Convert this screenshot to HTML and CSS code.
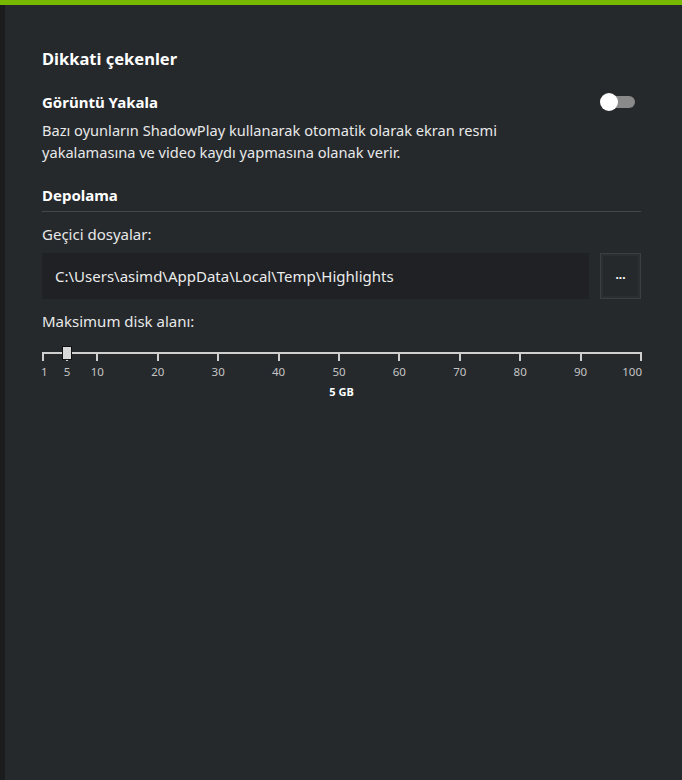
FILE: index.html
```html
<!DOCTYPE html>
<html>
<head>
	<title>Dikkati çekenler</title>
	<link rel="stylesheet" href="styles.css">
</head>
<body>
<div id="topbar"></div>
<div id="frame">
	<div id="edge"></div>
	<div id="panel">
		<h1>Dikkati çekenler</h1>

		<div class="row">
			<h2>Görüntü Yakala</h2>
			<div class="toggle"><span class="knob"></span></div>
		</div>
		<p class="desc">Bazı oyunların ShadowPlay kullanarak otomatik olarak ekran resmi<br>yakalamasına ve video kaydı yapmasına olanak verir.</p>

		<h2 class="section">Depolama</h2>

		<div class="label first">Geçici dosyalar:</div>
		<div class="pathrow">
			<div class="path">C:\Users\asimd\AppData\Local\Temp\Highlights</div>
			<button class="browse">...</button>
		</div>

		<div class="label">Maksimum disk alanı:</div>
		<div id="slider">
			<div class="track"></div>
			<div id="ticks"></div>
			<div class="thumb" id="thumb"></div>
		</div>
		<div class="value">5 GB</div>
	</div>
</div>

<script type="text/javascript">
	var marks=[1,5,10,20,30,40,50,60,70,80,90,100]
	var ticks=document.getElementById("ticks")
	function pos(v){
		return ((v-1)/99*100)+"%"
	}
	for(var i=0;i<marks.length;i++){
		var t=document.createElement("div")
		t.className="tick"
		if(i==0) t.className+=" start"
		if(i==marks.length-1) t.className+=" end"
		t.style.left=pos(marks[i])
		t.innerHTML='<span class="line"></span><span class="num">'+marks[i]+'</span>'
		ticks.appendChild(t)
	}
	document.getElementById("thumb").style.left=pos(5)
</script>
</body>
</html>
```

FILE: styles.css
```css
body{
	margin: 0;
	background: #25292c;
	font-family: "Noto Sans", "Open Sans", sans-serif;
	color: #e8e8e8;
	height: 780px;
	overflow: hidden;
}
#topbar{
	height: 5px;
	background: #76b900;
}
#frame{
	display: flex;
	height: 775px;
}
#edge{
	width: 5px;
	background: #1b1c1e;
}
#panel{
	flex: 1;
	padding: 0 41px 0 37px;
}
h1{
	margin: 42px 0 0;
	font-size: 16.5px;
	font-weight: bold;
	color: white;
	line-height: 24px;
}
h2{
	margin: 0;
	font-size: 15px;
	font-weight: bold;
	color: white;
	line-height: 20px;
}
.row{
	display: flex;
	justify-content: space-between;
	align-items: center;
	margin-top: 21px;
}
.toggle{
	position: relative;
	width: 35px;
	height: 18px;
	margin-right: 6px;
}
.toggle:before{
	content: "";
	position: absolute;
	left: 8px;
	right: 0;
	top: 3px;
	height: 12px;
	border-radius: 6px;
	background: #8a8a8a;
}
.knob{
	position: absolute;
	left: 0;
	top: 0;
	width: 18px;
	height: 18px;
	border-radius: 50%;
	background: white;
}
.desc{
	margin: 7px 0 0;
	font-size: 14.6px;
	line-height: 22px;
}
.section{
	margin-top: 22px;
	padding-bottom: 6px;
	border-bottom: 1px solid #44484b;
}
.label{
	font-size: 15px;
	line-height: 20px;
	margin-top: 12px;
}
.pathrow{
	display: flex;
	margin-top: 9px;
	margin-bottom: 12px;
}
.path{
	flex: 1;
	background: #1f2124;
	height: 46px;
	line-height: 46px;
	padding-left: 13px;
	font-size: 15px;
	color: #ececec;
}
.browse{
	width: 41px;
	height: 46px;
	margin-left: 11px;
	background: none;
	border: 1px solid #3b3f42;
	box-shadow: inset 0 0 0 2px #2b2f32;
	color: white;
	font-size: 12px;
	font-weight: bold;
	font-family: inherit;
	padding: 0 0 4px;
}
#slider{
	position: relative;
	height: 44px;
	margin: 0 0 0 1px;
}
.track{
	position: absolute;
	left: 0;
	right: 0;
	top: 21px;
	height: 2px;
	background: #cfcfcf;
}
.tick{
	position: absolute;
	top: 21px;
	width: 0;
}
.line{
	position: absolute;
	left: -1px;
	width: 2px;
	height: 9px;
	background: #cfcfcf;
}
.num{
	position: absolute;
	top: 12px;
	left: -20px;
	width: 40px;
	text-align: center;
	font-size: 11.5px;
	color: #c4c4c4;
}
.start .num{
	left: -2px;
	text-align: left;
}
.end .num{
	left: auto;
	right: -1px;
	text-align: right;
}
.thumb{
	position: absolute;
	top: 15px;
	margin-left: -5px;
	width: 8px;
	height: 12px;
	background: #d8d8d8;
	border: 1px solid #111;
}
.value{
	text-align: center;
	font-size: 11px;
	font-weight: bold;
	color: white;
	margin-top: 9px;
}
```
